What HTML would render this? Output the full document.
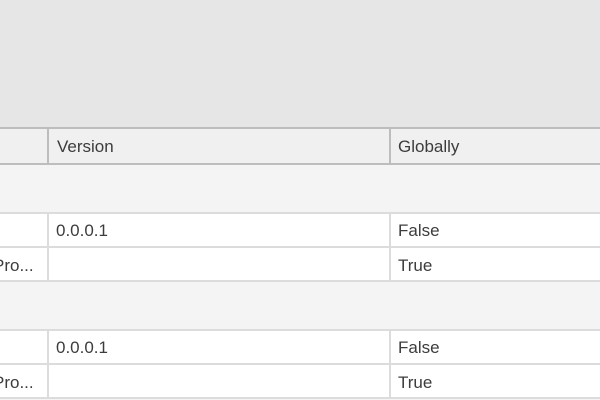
<!DOCTYPE html><html><head><style>
body{margin:0;width:600px;height:400px;overflow:hidden;background:#f4f4f4;font-family:"Liberation Sans",sans-serif;color:#3c3c3c;font-size:17px;position:relative}
div{position:absolute;box-sizing:border-box}
.t{line-height:20px}
</style></head><body>
<div style="left:0;top:0;width:600px;height:127px;background:#e6e6e6"></div>
<div style="left:0;top:127px;width:600px;height:38px;background:#f0f0f0;border-top:2px solid #bdbdbd;border-bottom:2px solid #bdbdbd"></div>
<div style="left:47px;top:129px;width:2px;height:34px;background:#bdbdbd"></div>
<div style="left:389px;top:129px;width:2px;height:34px;background:#bdbdbd"></div>
<div class="t" style="left:57px;top:137px">Version</div>
<div class="t" style="left:398px;top:137px">Globally</div>

<div style="left:0;top:212px;width:600px;height:70px;background:#fff;border-top:2px solid #dcdcdc;border-bottom:2px solid #dcdcdc"></div>
<div style="left:0;top:246px;width:600px;height:2px;background:#dcdcdc"></div>
<div style="left:47px;top:214px;width:2px;height:66px;background:#dcdcdc"></div>
<div style="left:389px;top:214px;width:2px;height:66px;background:#dcdcdc"></div>
<div class="t" style="left:56px;top:221px">0.0.0.1</div>
<div class="t" style="left:398px;top:221px">False</div>
<div class="t" style="left:-7px;top:256px">Pro...</div>
<div class="t" style="left:398px;top:256px">True</div>

<div style="left:0;top:329px;width:600px;height:70px;background:#fff;border-top:2px solid #dcdcdc;border-bottom:2px solid #dcdcdc"></div>
<div style="left:0;top:363px;width:600px;height:2px;background:#dcdcdc"></div>
<div style="left:47px;top:331px;width:2px;height:66px;background:#dcdcdc"></div>
<div style="left:389px;top:331px;width:2px;height:66px;background:#dcdcdc"></div>
<div class="t" style="left:56px;top:338px">0.0.0.1</div>
<div class="t" style="left:398px;top:338px">False</div>
<div class="t" style="left:-7px;top:373px">Pro...</div>
<div class="t" style="left:398px;top:373px">True</div>
</body></html>
